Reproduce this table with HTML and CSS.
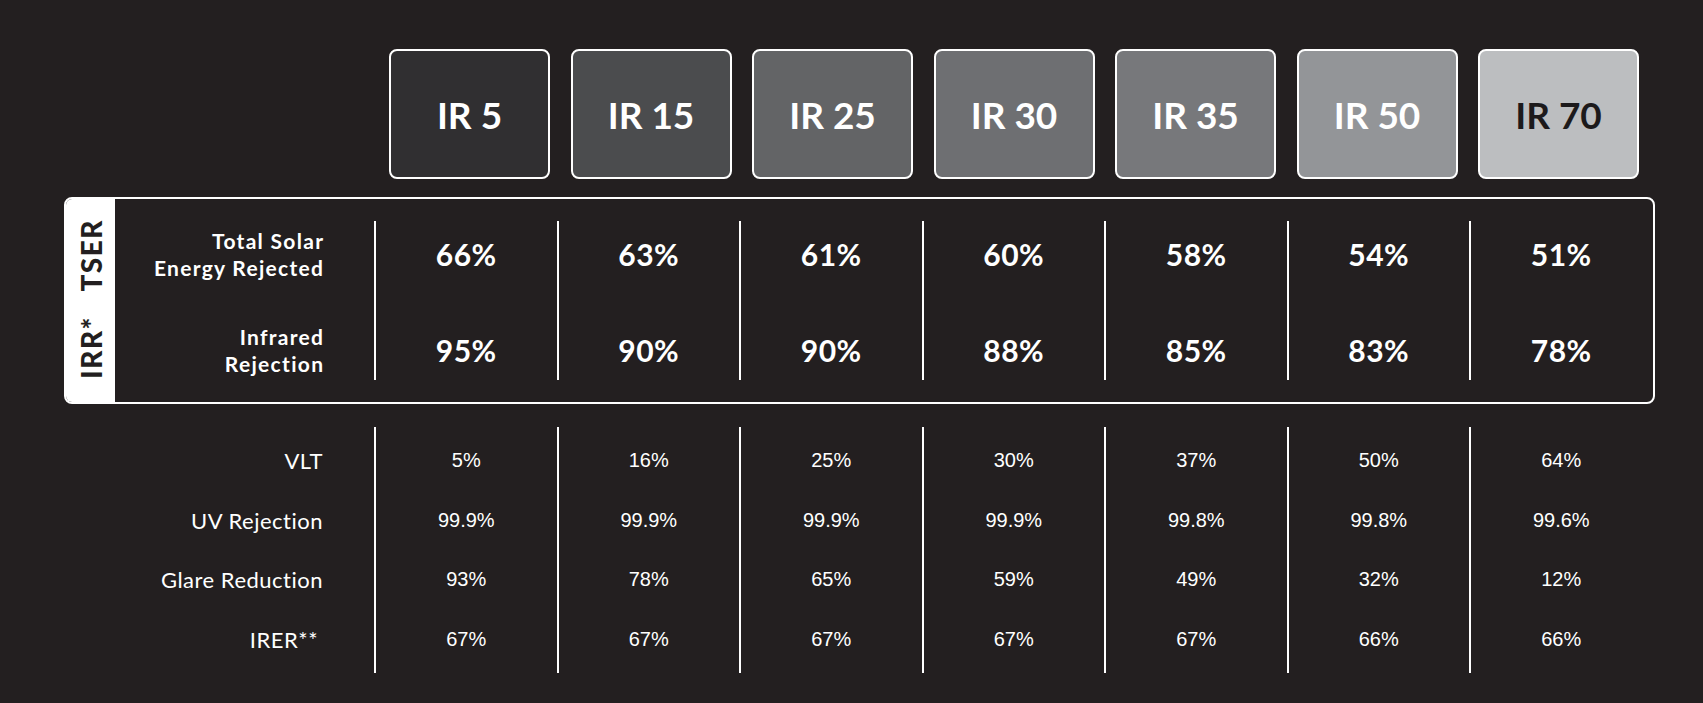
FILE: index.html
```html
<!DOCTYPE html>
<html lang="en">
<head>
<meta charset="utf-8">
<title>IR Film Comparison</title>
<link rel="stylesheet" href="styles.css">
</head>
<body>
<div class="page">
  <div class="heads">
    <div class="head t1">IR 5</div>
    <div class="head t2">IR 15</div>
    <div class="head t3">IR 25</div>
    <div class="head t4">IR 30</div>
    <div class="head t5">IR 35</div>
    <div class="head t6">IR 50</div>
    <div class="head t7">IR 70</div>
  </div>

  <div class="panel">
    <div class="tab">
      <div class="tab-slot"><span class="tab-label">TSER</span></div>
      <div class="tab-slot"><span class="tab-label">IRR*</span></div>
    </div>
    <div class="col labels">
      <div class="cell">Total Solar<br>Energy Rejected</div>
      <div class="cell">Infrared<br>Rejection</div>
    </div>
    <div class="col vals"><div class="cell">66%</div><div class="cell">95%</div></div>
    <div class="col vals"><div class="cell">63%</div><div class="cell">90%</div></div>
    <div class="col vals"><div class="cell">61%</div><div class="cell">90%</div></div>
    <div class="col vals"><div class="cell">60%</div><div class="cell">88%</div></div>
    <div class="col vals"><div class="cell">58%</div><div class="cell">85%</div></div>
    <div class="col vals"><div class="cell">54%</div><div class="cell">83%</div></div>
    <div class="col vals"><div class="cell">51%</div><div class="cell">78%</div></div>
  </div>

  <div class="specs">
    <div class="spec-labels">
      <div class="row">VLT</div>
      <div class="row">UV Rejection</div>
      <div class="row">Glare Reduction</div>
      <div class="row irer">IRER**</div>
    </div>
    <div class="spec-col"><div class="row">5%</div><div class="row">99.9%</div><div class="row">93%</div><div class="row">67%</div></div>
    <div class="spec-col"><div class="row">16%</div><div class="row">99.9%</div><div class="row">78%</div><div class="row">67%</div></div>
    <div class="spec-col"><div class="row">25%</div><div class="row">99.9%</div><div class="row">65%</div><div class="row">67%</div></div>
    <div class="spec-col"><div class="row">30%</div><div class="row">99.9%</div><div class="row">59%</div><div class="row">67%</div></div>
    <div class="spec-col"><div class="row">37%</div><div class="row">99.8%</div><div class="row">49%</div><div class="row">67%</div></div>
    <div class="spec-col"><div class="row">50%</div><div class="row">99.8%</div><div class="row">32%</div><div class="row">66%</div></div>
    <div class="spec-col"><div class="row">64%</div><div class="row">99.6%</div><div class="row">12%</div><div class="row">66%</div></div>
  </div>
</div>
</body>
</html>
```

FILE: styles.css
```css
html, body {
  margin: 0;
  padding: 0;
  background: #231f20;
}

body {
  color: #ffffff;
  font-family: Lato, "Open Sans", sans-serif;
  width: 1703px;
  height: 703px;
  overflow: hidden;
}

.page {
  padding-top: 49px;
}

/* ---------- product headers ---------- */
.heads {
  display: flex;
  gap: 20.5px;
  padding-left: 389px;
}

.head {
  box-sizing: border-box;
  width: 161px;
  height: 130px;
  border: 2px solid #ffffff;
  border-radius: 8px;
  display: flex;
  align-items: center;
  justify-content: center;
  font-weight: 700;
  font-size: 37px;
  color: #ffffff;
}

.t1 { background: #302f31; }
.t2 { background: #4b4c4e; }
.t3 { background: #636466; }
.t4 { background: #6e6f72; }
.t5 { background: #77787b; }
.t6 { background: #939598; }
.t7 { background: #bcbec0; color: #1c1a1b; }

/* ---------- highlighted panel ---------- */
.panel {
  box-sizing: border-box;
  margin: 18px 0 0 64px;
  width: 1591px;
  height: 207px;
  border: 2px solid #ffffff;
  border-radius: 8px;
  overflow: hidden;
  display: flex;
}

.tab {
  flex: 0 0 49px;
  background: #ffffff;
  color: #231f20;
  display: grid;
  grid-template-rows: 92px 92px;
  padding-top: 10px;
}

.tab-slot {
  display: flex;
  align-items: center;
  justify-content: center;
}

.tab-label {
  writing-mode: vertical-rl;
  transform: rotate(180deg);
  font-weight: 900;
  font-size: 28px;
  line-height: 1;
  letter-spacing: 1.5px;
}

.col {
  box-sizing: border-box;
  margin: 22px 0;
  padding: 8px 0 5px;
  display: flex;
  flex-direction: column;
  justify-content: space-between;
}

.col .cell {
  height: 50px;
  display: flex;
  align-items: center;
}

.labels {
  flex: 0 0 259px;
  padding-right: 51px;
}

.labels .cell {
  justify-content: flex-end;
  text-align: right;
  font-weight: 700;
  font-size: 21px;
  line-height: 27px;
  letter-spacing: 1.3px;
  margin-right: -1.3px;
}

.vals {
  flex: 0 0 182.5px;
  border-left: 2px solid #ffffff;
}

.vals .cell {
  justify-content: center;
  font-weight: 700;
  font-size: 30px;
  letter-spacing: 0.5px;
}

/* ---------- spec table ---------- */
.specs {
  display: flex;
  margin-top: 23px;
}

.spec-labels {
  box-sizing: border-box;
  flex: 0 0 374px;
  padding: 4px 51px 4px 0;
  text-align: right;
  font-size: 22px;
  letter-spacing: 0.5px;
}

.spec-col {
  box-sizing: border-box;
  flex: 0 0 182.5px;
  border-left: 2px solid #ffffff;
  padding: 4px 0;
  text-align: center;
  font-family: "Liberation Sans", Arial, sans-serif;
  font-size: 20px;
}

.row {
  height: 59.5px;
  line-height: 59.5px;
  white-space: nowrap;
}

.irer {
  padding-right: 5px;
}
```
